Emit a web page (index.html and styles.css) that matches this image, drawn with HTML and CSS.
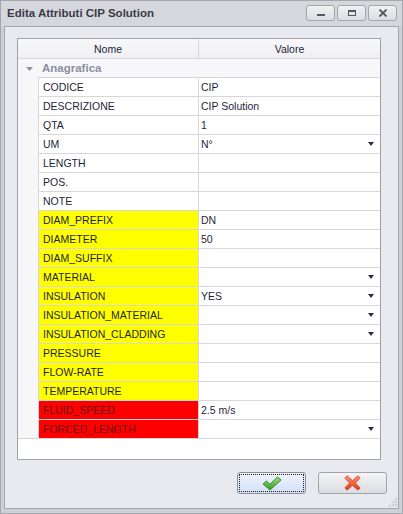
FILE: index.html
```html
<!DOCTYPE html>
<html>
  <head>
    <meta charset="UTF-8" />
    <title>Edita Attributi CIP Solution</title>
    <link rel="stylesheet" href="styles.css">
  </head>
  <body>
    <div class="window">
      <!-- title bar with caption and the three window buttons -->
      <div class="titlebar">
        <span class="caption">Edita Attributi CIP Solution</span>
        <div class="winbuttons">
          <span class="winbtn">
            <svg width="10" height="8" viewBox="0 0 10 8"><rect x="1" y="5" width="8" height="2" fill="#55565f"/></svg>
          </span>
          <span class="winbtn">
            <svg width="10" height="8" viewBox="0 0 10 8"><rect x="1.5" y="1.5" width="7" height="5" fill="none" stroke="#55565f" stroke-width="1"/><rect x="1" y="1" width="8" height="2" fill="#55565f"/></svg>
          </span>
          <span class="winbtn">
            <svg width="10" height="8" viewBox="0 0 10 8"><path d="M1.5 0.5 L8.5 7.5 M8.5 0.5 L1.5 7.5" stroke="#55565f" stroke-width="1.8"/></svg>
          </span>
        </div>
      </div>

      <div class="client">
        <!-- property grid -->
        <div class="grid">
          <div class="header">
            <div class="head-name">Nome</div>
            <div class="head-value">Valore</div>
          </div>
          <div class="category">
            <svg class="cat-arrow" width="7" height="4" viewBox="0 0 7 4"><path d="M0 0 L7 0 L3.5 4 Z" fill="#8f909a"/></svg>
            <span>Anagrafica</span>
          </div>
          <div class="row"><div class="indent"></div><div class="name">CODICE</div><div class="value">CIP</div></div>
          <div class="row"><div class="indent"></div><div class="name">DESCRIZIONE</div><div class="value">CIP Solution</div></div>
          <div class="row"><div class="indent"></div><div class="name">QTA</div><div class="value">1</div></div>
          <div class="row"><div class="indent"></div><div class="name">UM</div><div class="value combo">N°</div></div>
          <div class="row"><div class="indent"></div><div class="name">LENGTH</div><div class="value"></div></div>
          <div class="row"><div class="indent"></div><div class="name">POS.</div><div class="value"></div></div>
          <div class="row"><div class="indent"></div><div class="name">NOTE</div><div class="value"></div></div>
          <div class="row"><div class="indent"></div><div class="name yellow">DIAM_PREFIX</div><div class="value">DN</div></div>
          <div class="row"><div class="indent"></div><div class="name yellow">DIAMETER</div><div class="value">50</div></div>
          <div class="row"><div class="indent"></div><div class="name yellow">DIAM_SUFFIX</div><div class="value"></div></div>
          <div class="row"><div class="indent"></div><div class="name yellow">MATERIAL</div><div class="value combo"></div></div>
          <div class="row"><div class="indent"></div><div class="name yellow">INSULATION</div><div class="value combo">YES</div></div>
          <div class="row"><div class="indent"></div><div class="name yellow">INSULATION_MATERIAL</div><div class="value combo"></div></div>
          <div class="row"><div class="indent"></div><div class="name yellow">INSULATION_CLADDING</div><div class="value combo"></div></div>
          <div class="row"><div class="indent"></div><div class="name yellow">PRESSURE</div><div class="value"></div></div>
          <div class="row"><div class="indent"></div><div class="name yellow">FLOW-RATE</div><div class="value"></div></div>
          <div class="row"><div class="indent"></div><div class="name yellow">TEMPERATURE</div><div class="value"></div></div>
          <div class="row"><div class="indent"></div><div class="name red">FLUID_SPEED</div><div class="value">2.5 m/s</div></div>
          <div class="row last"><div class="indent"></div><div class="name red">FORCED_LENGTH</div><div class="value combo"></div></div>
        </div>

        <!-- OK / Cancel -->
        <div class="actions">
          <button class="btn btn-ok">
            <span class="focus">
              <svg width="20" height="15" viewBox="0 0 20 15">
                <defs>
                  <linearGradient id="gok" x1="0" y1="0" x2="0" y2="1">
                    <stop offset="0" stop-color="#9be27a"/>
                    <stop offset="1" stop-color="#2f9a22"/>
                  </linearGradient>
                </defs>
                <path d="M1 8 L4.5 5 L8 8.3 L15.5 1 L19 4 L8 14 Z" fill="url(#gok)" stroke="#3f8a2a" stroke-width="1" stroke-linejoin="round"/>
              </svg>
            </span>
          </button>
          <button class="btn btn-cancel">
            <svg width="17" height="16" viewBox="0 0 17 16">
              <defs>
                <linearGradient id="gx" x1="0" y1="0" x2="0" y2="1">
                  <stop offset="0" stop-color="#ff9470"/>
                  <stop offset="1" stop-color="#e2361a"/>
                </linearGradient>
              </defs>
              <path d="M0.8 3 L3 0.8 L8.5 5.6 L14 0.8 L16.2 3 L11.4 8 L16.2 13 L14 15.2 L8.5 10.4 L3 15.2 L0.8 13 L5.6 8 Z" fill="url(#gx)" stroke="#cc4426" stroke-width="0.8" stroke-linejoin="round"/>
            </svg>
          </button>
        </div>

        <svg class="grip" width="11" height="11" viewBox="0 0 11 11">
          <path d="M10 1 L1 10 M10 4 L4 10 M10 7 L7 10" stroke="#9a9ba3" stroke-width="1" stroke-dasharray="1 1"/>
        </svg>
      </div>
    </div>
  </body>
</html>
```

FILE: styles.css
```css
body {
  margin: 0;
  font-family: "Liberation Sans", Arial, sans-serif;
  font-size: 10.5px;
  color: #1e1f3a;
}
.window {
  width: 403px;
  height: 514px;
  box-sizing: border-box;
  background: #cfd0d6;
  border: 1px solid #a6a7ae;
  display: flex;
  flex-direction: column;
}
/* title bar */
.titlebar {
  height: 26px;
  display: flex;
  align-items: center;
  justify-content: space-between;
  padding: 0 5px 0 6px;
  background: #d6d7dc;
}
.caption {
  font-weight: bold;
  font-size: 11.5px;
  color: #3a3b47;
  margin-top: -1px;
}
.winbuttons {
  display: flex;
  gap: 2px;
  margin-top: -1px;
}
.winbtn {
  width: 27px;
  height: 14px;
  border: 1px solid #a3a4ac;
  border-radius: 3px;
  background: linear-gradient(#f1f1f4, #dcdde2);
  display: flex;
  align-items: center;
  justify-content: center;
}
/* client area */
.client {
  position: relative;
  flex: 1;
  margin: 0 3px 4px 3px;
  border: 1px solid #a4a5ad;
  background: #e9eaef;
  padding: 11px 11px 14px 12px;
  display: flex;
  flex-direction: column;
}
/* property grid */
.grid {
  height: 422px;
  box-sizing: border-box;
  margin-right: 6px;
  border: 1px solid #a0a1aa;
  background: #ffffff;
}
.header {
  display: flex;
  height: 19px;
  line-height: 20px;
  border-bottom: 1px solid #d6d6dc;
  background: linear-gradient(#f8f8fa, #f0f0f4);
  text-align: center;
}
.head-name {
  width: 180px;
  border-right: 1px solid #d6d6dc;
}
.head-value {
  flex: 1;
}
.category {
  height: 18px;
  display: flex;
  align-items: center;
  background: #f7f7fa;
  color: #8c8e9e;
  font-weight: bold;
  font-size: 11.5px;
}
.cat-arrow {
  margin: 1px 9px 0 8px;
}
.row {
  display: flex;
  height: 19px;
}
.row.last {
  height: 20px;
  border-bottom: 1px solid #d6d6dc;
  box-sizing: border-box;
}
.indent {
  width: 20px;
  background: #f7f7fa;
  border-right: 1px solid #d6d6dc;
}
.name,
.value {
  line-height: 17px;
  padding-top: 1px;
  border-top: 1px solid #d6d6dc;
}
.name {
  width: 155px;
  padding-left: 4px;
  border-right: 1px solid #d6d6dc;
}
.value {
  flex: 1;
  padding-left: 2px;
  position: relative;
}
.yellow {
  background: #ffff00;
}
.red {
  background: #ff0000;
  color: #6a1010;
}
/* dropdown arrow of combo cells */
.combo::after {
  content: "";
  position: absolute;
  right: 6px;
  top: 7px;
  border-left: 3.5px solid transparent;
  border-right: 3.5px solid transparent;
  border-top: 4px solid #2e2e40;
}
/* buttons */
.actions {
  display: flex;
  justify-content: flex-end;
  gap: 12px;
  margin-top: 12px;
}
.btn {
  width: 69px;
  height: 22px;
  padding: 0;
  border: 1px solid #a2a3ab;
  border-radius: 3px;
  display: flex;
  align-items: center;
  justify-content: center;
}
.btn-ok {
  border-color: #8f909a;
  background: linear-gradient(#f0f4fd, #d3dff8);
}
.btn-cancel {
  background: linear-gradient(#f4f4f6, #dcdde2);
}
.focus {
  width: 63px;
  height: 16px;
  border: 1px dotted #202020;
  display: flex;
  align-items: center;
  justify-content: center;
}
.grip {
  position: absolute;
  right: 0;
  bottom: 0;
}
```
